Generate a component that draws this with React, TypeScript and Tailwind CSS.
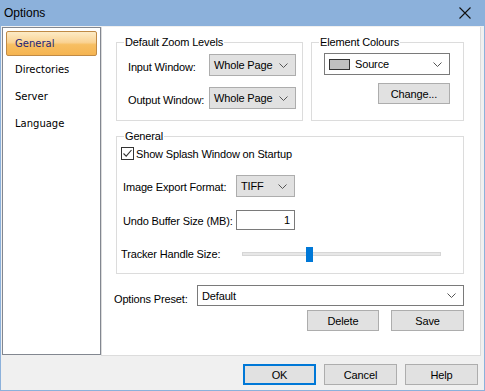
import React from "react";

const ui = "font-['Liberation_Sans',Arial,sans-serif] text-[11px] leading-[14px] tracking-[-0.15px] text-black";

function Chevron() {
  return (
    <svg width="9" height="5" viewBox="0 0 9 5" className="shrink-0">
      <path d="M0.5 0.5 L4.5 4.5 L8.5 0.5" fill="none" stroke="#555" strokeWidth="1" />
    </svg>
  );
}

function Combo({ value, w }: { value: string; w: string }) {
  return (
    <div className={`${w} h-[22px] flex items-center justify-between pl-[4px] pr-[7px] border bg-[#e1e1e1] border-[#adadad]`}>
      <span>{value}</span>
      <Chevron />
    </div>
  );
}

function Btn({ label, w = "w-[72px]", focus = false }: { label: string; w?: string; focus?: boolean }) {
  return (
    <div
      className={`${w} h-[21px] flex items-center justify-center bg-[#e1e1e1] ${
        focus ? "border-2 border-[#0078d7]" : "border border-[#adadad]"
      }`}
    >
      {label}
    </div>
  );
}

function Group({ title, className, children }: { title: string; className: string; children: React.ReactNode }) {
  return (
    <div className={`relative border border-[#dcdcdc] ${className}`}>
      <span className="absolute -top-[8px] left-[7px] bg-white px-[1px]">{title}</span>
      {children}
    </div>
  );
}

export default function App() {
  const pages = ["Directories", "Server", "Language"];

  return (
    <div className={`${ui} w-[485px] h-[391px] flex flex-col bg-[#8cb1db]`}>
      <div className="h-[26px] flex items-center justify-between pl-[4px] pr-[14px] shrink-0">
        <span className="text-[12px] tracking-normal">Options</span>
        <svg width="12" height="12" viewBox="0 0 12 12">
          <path d="M0.5 0.5 L11.5 11.5 M11.5 0.5 L0.5 11.5" stroke="#111" strokeWidth="1.1" />
        </svg>
      </div>

      <div className="flex-1 mx-[1px] mb-[1px] bg-[#f0f0f0] flex flex-col">
        <div className="flex pt-[1px] pl-[1px]">
          <div className="w-[99px] h-[328px] bg-white border border-[#828790] p-[3px] font-['DejaVu_Sans',sans-serif] text-[10px] tracking-normal">
            <div className="h-[25px] flex items-center pl-[8px] rounded-[2px] border border-[#c08a45] text-[#1e1e78] bg-[linear-gradient(to_bottom,#fdebc6_0%,#fad394_45%,#f7bf62_55%,#f5b451_100%)]">
              General
            </div>
            {pages.map((p) => (
              <div key={p} className="h-[27px] flex items-center pl-[9px] first:mt-[2px]">
                {p}
              </div>
            ))}
          </div>

          <div className="w-[380px] h-[329px] bg-white border-x border-b border-[#dcdcdc] pl-[14px] pt-[15px]">
            <div className="flex">
              <Group title="Default Zoom Levels" className="w-[187px] h-[79px] pt-[11px] pl-[11px]">
                <div className="flex items-center">
                  <span className="w-[81px] pt-[4px]">Input Window:</span>
                  <Combo value="Whole Page" w="w-[87px]" />
                </div>
                <div className="flex items-center mt-[11px]">
                  <span className="w-[81px] pt-[4px]">Output Window:</span>
                  <Combo value="Whole Page" w="w-[87px]" />
                </div>
              </Group>
              <Group title="Element Colours" className="ml-[8px] w-[153px] h-[79px] pt-[10px] pl-[12px]">
                <div className="w-[126px] h-[22px] flex items-center justify-between pl-[4px] pr-[7px] bg-white border border-[#7a7a7a]">
                  <span className="flex items-center">
                    <span className="w-[21px] h-[11px] bg-[#c0c0c0] border border-[#333]" />
                    <span className="ml-[5px]">Source</span>
                  </span>
                  <Chevron />
                </div>
                <div className="flex justify-end w-[126px] mt-[8px]">
                  <Btn label="Change..." />
                </div>
              </Group>
            </div>

            <Group title="General" className="mt-[15px] w-[348px] h-[138px] pt-[10px] pl-[4px]">
              <div className="flex items-center h-[13px]">
                <span className="w-[13px] h-[13px] border border-[#333] bg-white flex items-center justify-center">
                  <svg width="11" height="11" viewBox="0 0 11 11">
                    <path d="M1.5 5.5 L4.2 8.2 L9.5 2" fill="none" stroke="#333" strokeWidth="1.1" />
                  </svg>
                </span>
                <span className="ml-[2px]">Show Splash Window on Startup</span>
              </div>
              <div className="flex items-center mt-[15px] pl-[2px]">
                <span className="w-[113px] pt-[2px]">Image Export Format:</span>
                <Combo value="TIFF" w="w-[59px]" />
              </div>
              <div className="flex items-center mt-[13px] pl-[2px]">
                <span className="w-[113px] pt-[1px]">Undo Buffer Size (MB):</span>
                <div className="w-[59px] h-[20px] border border-[#7a7a7a] bg-white flex items-center justify-end pr-[4px]">1</div>
              </div>
              <div className="flex items-center mt-[16px] h-[15px]">
                <span className="w-[121px]">Tracker Handle Size:</span>
                <div className="relative w-[199px] h-[4px] bg-[#e7e7e7] border border-[#d6d6d6]">
                  <span className="absolute left-[63px] -top-[6px] w-[7px] h-[15px] bg-[#0078d7]" />
                </div>
              </div>
            </Group>

            <div className="flex items-center mt-[11px] -ml-[2px]">
              <span className="w-[83px] pt-[6px]">Options Preset:</span>
              <div className="w-[267px] h-[21px] flex items-center justify-between pl-[4px] pr-[7px] bg-white border border-[#7a7a7a]">
                <span>Default</span>
                <Chevron />
              </div>
            </div>
            <div className="flex justify-end w-[348px] mt-[4px] gap-[12px]">
              <Btn label="Delete" />
              <Btn label="Save" w="w-[73px]" />
            </div>
          </div>
        </div>

        <div className="flex justify-end gap-[8px] pr-[6px] mt-[8px]">
          <Btn label="OK" w="w-[73px]" focus />
          <Btn label="Cancel" w="w-[73px]" />
          <Btn label="Help" w="w-[73px]" />
        </div>
      </div>
    </div>
  );
}
